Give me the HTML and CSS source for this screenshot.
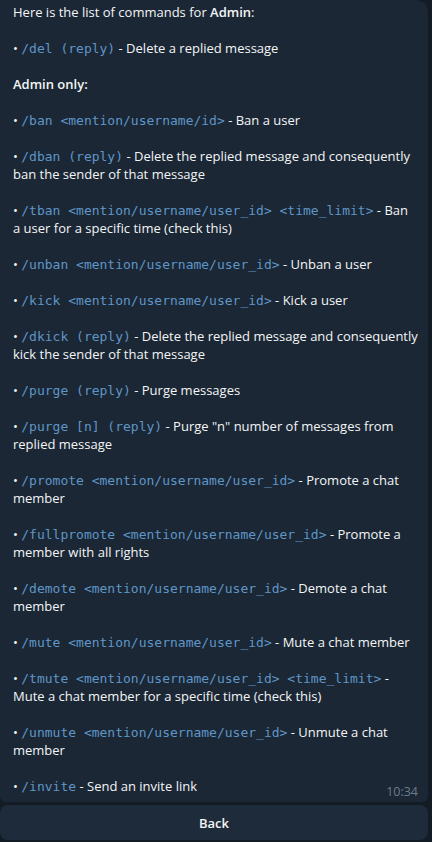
FILE: index.html
```html
<!DOCTYPE html>
<html>
<head>
<meta charset="utf-8">
<link rel="stylesheet" href="styles.css">
</head>
<body>
<div class="chat">
  <div class="bubble">
    <p>Here is the list of commands for <b>Admin</b>:</p>
    <p>• <code>/del (reply)</code> - Delete a replied message</p>
    <p><b>Admin only:</b></p>
    <p>• <code>/ban &lt;mention/username/id&gt;</code> - Ban a user</p>
    <p>• <code>/dban (reply)</code> - Delete the replied message and consequently ban the sender of that message</p>
    <p>• <code>/tban &lt;mention/username/user_id&gt; &lt;time_limit&gt;</code> - Ban a user for a specific time (check this)</p>
    <p>• <code>/unban &lt;mention/username/user_id&gt;</code> - Unban a user</p>
    <p>• <code>/kick &lt;mention/username/user_id&gt;</code> - Kick a user</p>
    <p>• <code>/dkick (reply)</code> - Delete the replied message and consequently kick the sender of that message</p>
    <p>• <code>/purge (reply)</code> - Purge messages</p>
    <p>• <code>/purge [n] (reply)</code> - Purge "n" number of messages from replied message</p>
    <p>• <code>/promote &lt;mention/username/user_id&gt;</code> - Promote a chat member</p>
    <p>• <code>/fullpromote &lt;mention/username/user_id&gt;</code> - Promote a member with all rights</p>
    <p>• <code>/demote &lt;mention/username/user_id&gt;</code> - Demote a chat member</p>
    <p>• <code>/mute &lt;mention/username/user_id&gt;</code> - Mute a chat member</p>
    <p>• <code>/tmute &lt;mention/username/user_id&gt; &lt;time_limit&gt;</code> - Mute a chat member for a specific time (check this)</p>
    <p>• <code>/unmute &lt;mention/username/user_id&gt;</code> - Unmute a chat member</p>
    <p>• <code>/invite</code> - Send an invite link</p>
    <span class="time">10:34</span>
  </div>
  <button class="kb-btn">Back</button>
</div>
</body>
</html>
```
FILE: styles.css
```css
html, body {
  margin: 0;
  padding: 0;
  background: #131b24;
  height: 100%;
}
body {
  font-family: "Open Sans", "Noto Sans", sans-serif;
  font-size: 13px;
  color: #f3f5f7;
}
.chat {
  width: 428px;
  display: flex;
  flex-direction: column;
  gap: 3px;
}
.bubble {
  position: relative;
  background: #1b2734;
  border-radius: 0 12px 6px 6px;
  padding: 3px 10px 7px 13px;
  line-height: 18px;
}
.bubble p {
  margin: 0 0 18px 0;
}
.bubble p:last-of-type {
  margin-bottom: 0;
}
.bubble b {
  font-weight: 600;
}
code {
  font-family: "DejaVu Sans Mono", "Liberation Mono", monospace;
  font-size: 13px;
  line-height: 1;
  color: #5f96c8;
}
.time {
  position: absolute;
  right: 10px;
  bottom: 1px;
  font-size: 12.5px;
  line-height: 18px;
  color: #6c7c8c;
}
.kb-btn {
  height: 35px;
  border: none;
  border-radius: 8px;
  background: #1e2b3a;
  color: #f3f5f7;
  font-family: "Open Sans", "Noto Sans", sans-serif;
  font-size: 13px;
  font-weight: 600;
  padding: 0;
}
```
